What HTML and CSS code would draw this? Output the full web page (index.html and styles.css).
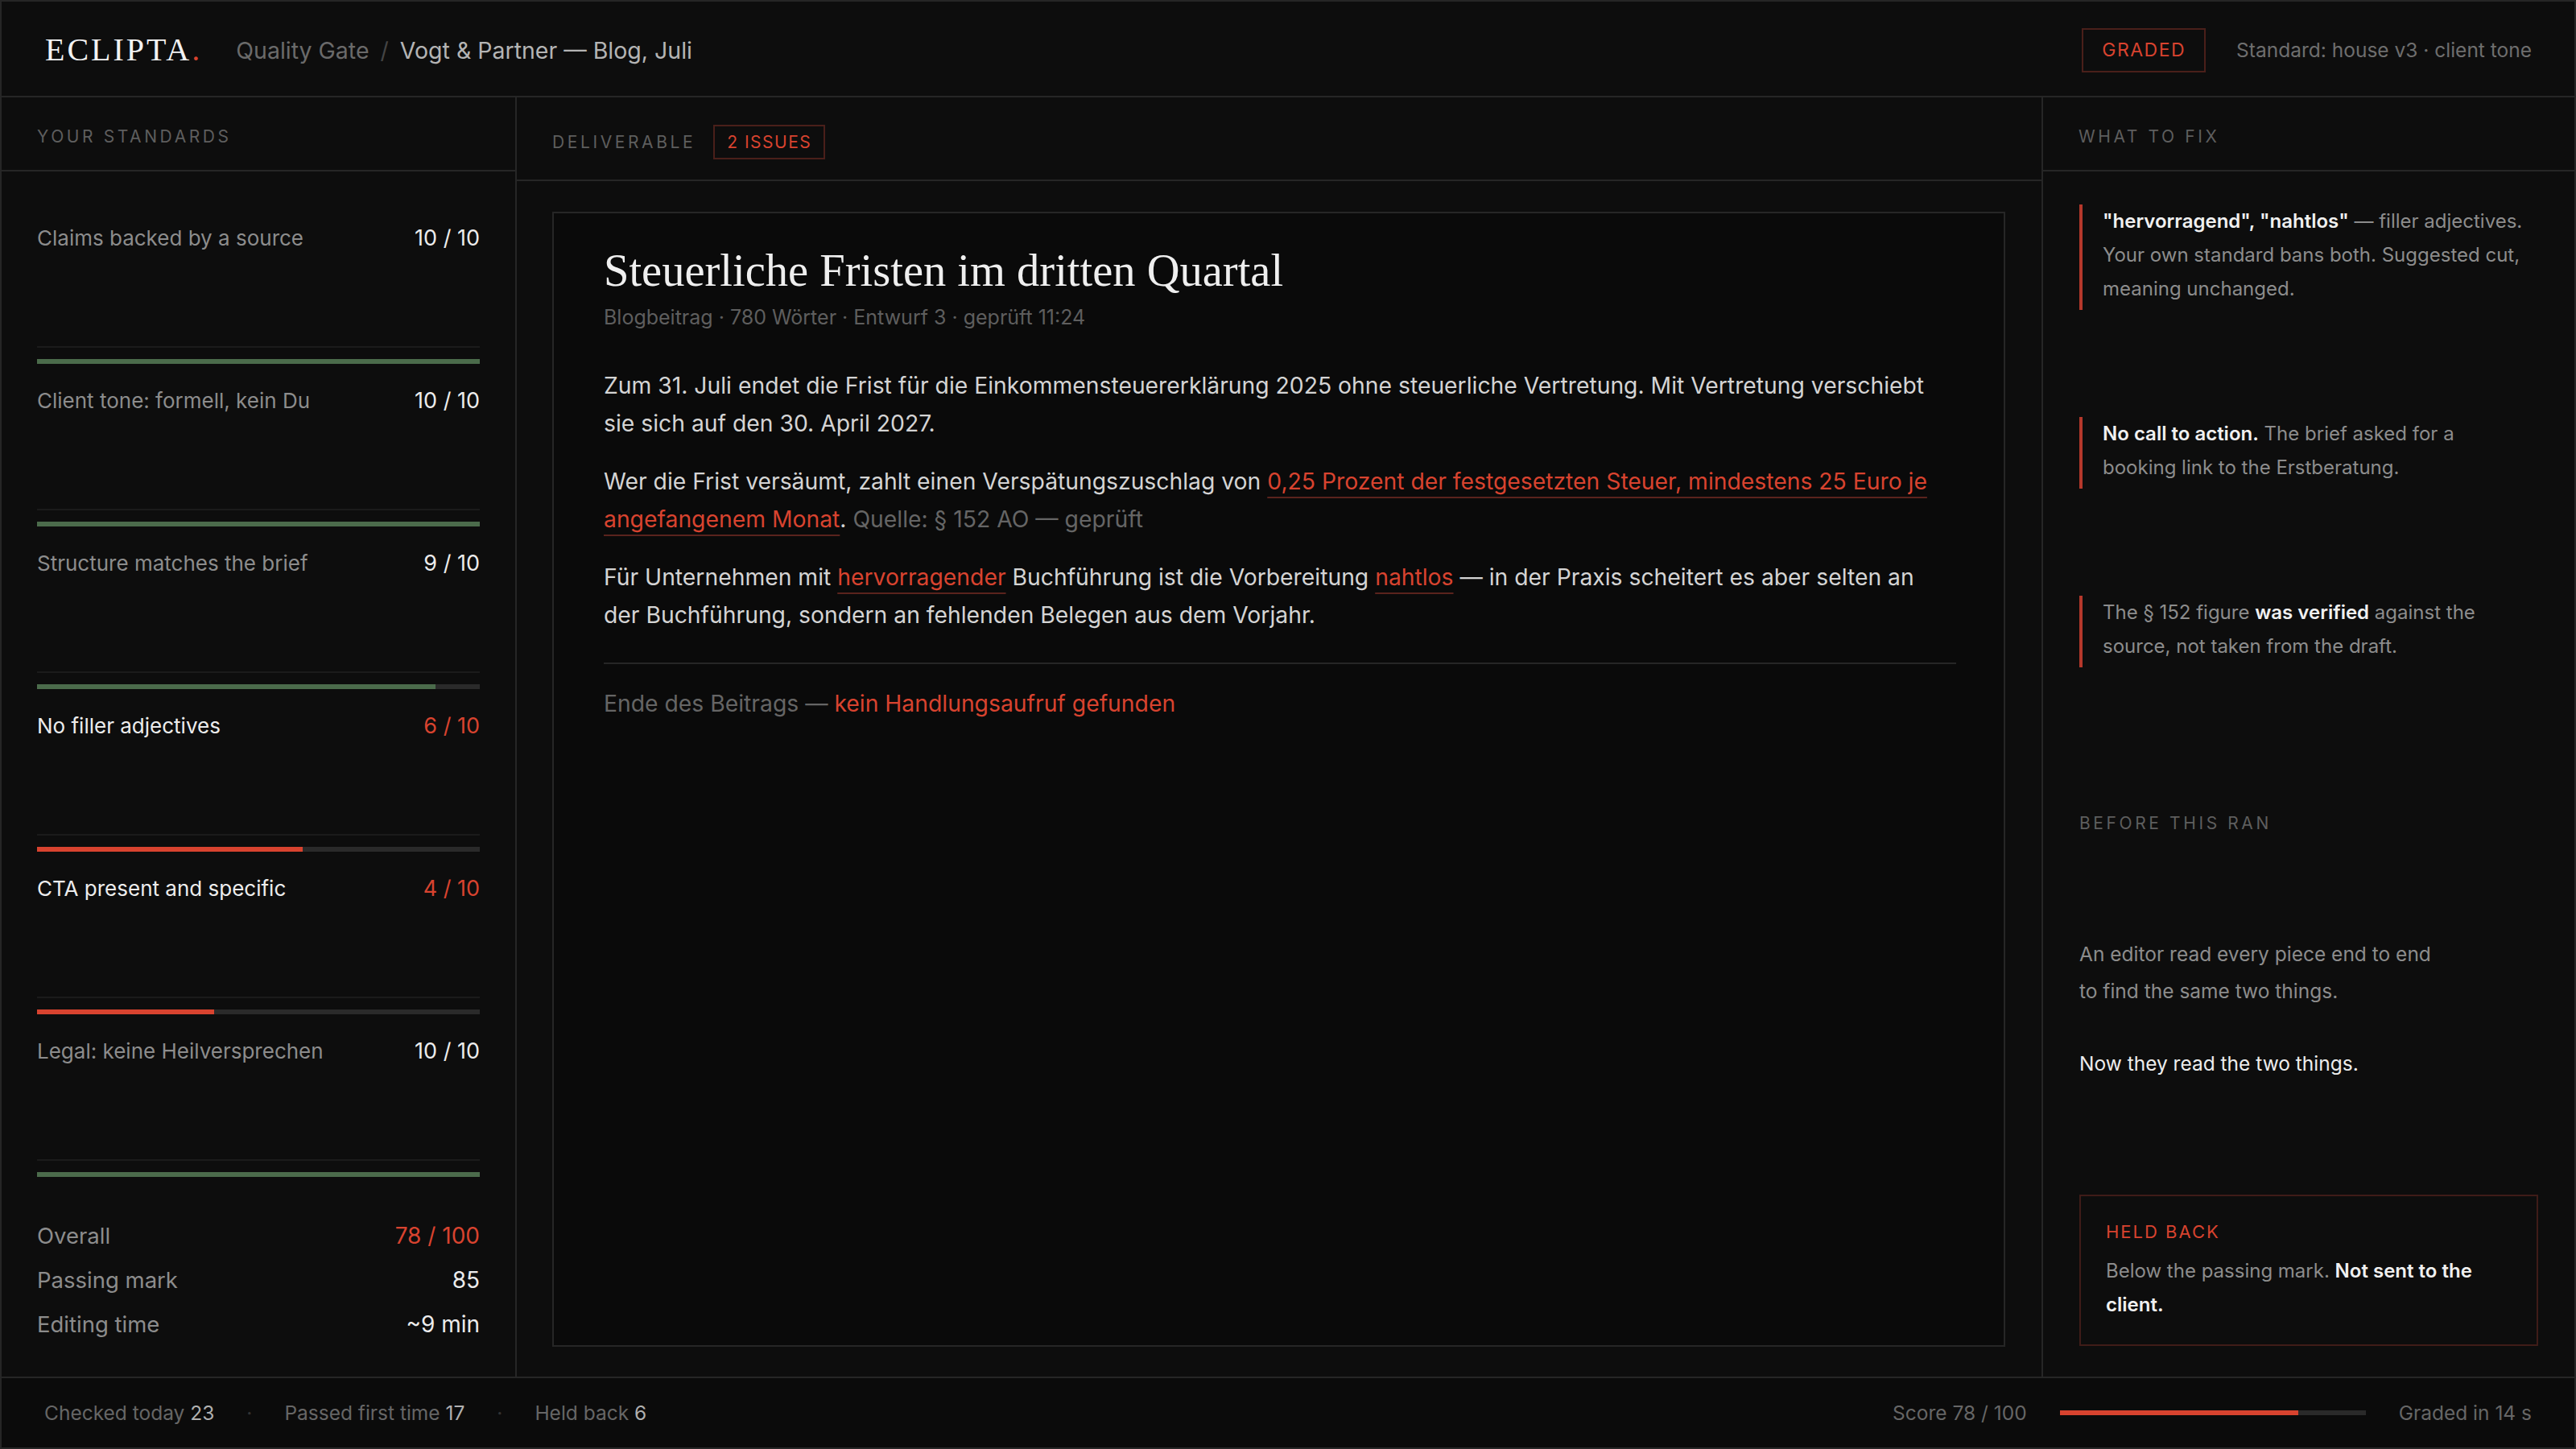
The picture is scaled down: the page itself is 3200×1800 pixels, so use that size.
FILE: index.html
```html
<!DOCTYPE html>
<html lang="de">
<head>
  <meta charset="UTF-8" />
  <meta name="viewport" content="width=device-width, initial-scale=1.0" />
  <title>ECLIPTA — Quality Gate</title>
  <link rel="stylesheet" href="styles.css">
</head>
<body>
  <div class="app">
    <header class="topbar">
      <div class="brand">ECLIPTA<span class="brand-dot">.</span></div>
      <nav class="crumbs">
        <span class="crumb-root">Quality Gate</span>
        <span class="crumb-sep">/</span>
        <span class="crumb-current">Vogt &amp; Partner — Blog, Juli</span>
      </nav>
      <div class="topbar-right">
        <span class="tag tag-lg">GRADED</span>
        <span class="standard">Standard: house v3 · client tone</span>
      </div>
    </header>

    <main class="columns">
      <!-- left: the rubric -->
      <aside class="panel standards">
        <div class="panel-head">Your standards</div>
        <div class="standards-body">
          <div class="std">
            <div class="std-head"><span class="std-name">Claims backed by a source</span><span class="std-score">10 / 10</span></div>
            <div class="std-rule"></div>
            <div class="std-bar"><span class="fill ok" style="width: 100%"></span></div>
          </div>
          <div class="std">
            <div class="std-head"><span class="std-name">Client tone: formell, kein Du</span><span class="std-score">10 / 10</span></div>
            <div class="std-rule"></div>
            <div class="std-bar"><span class="fill ok" style="width: 100%"></span></div>
          </div>
          <div class="std">
            <div class="std-head"><span class="std-name">Structure matches the brief</span><span class="std-score">9 / 10</span></div>
            <div class="std-rule"></div>
            <div class="std-bar"><span class="fill ok" style="width: 90%"></span></div>
          </div>
          <div class="std fail">
            <div class="std-head"><span class="std-name">No filler adjectives</span><span class="std-score">6 / 10</span></div>
            <div class="std-rule"></div>
            <div class="std-bar"><span class="fill bad" style="width: 60%"></span></div>
          </div>
          <div class="std fail">
            <div class="std-head"><span class="std-name">CTA present and specific</span><span class="std-score">4 / 10</span></div>
            <div class="std-rule"></div>
            <div class="std-bar"><span class="fill bad" style="width: 40%"></span></div>
          </div>
          <div class="std">
            <div class="std-head"><span class="std-name">Legal: keine Heilversprechen</span><span class="std-score">10 / 10</span></div>
            <div class="std-rule"></div>
            <div class="std-bar"><span class="fill ok" style="width: 100%"></span></div>
          </div>

          <div class="summary">
            <div class="sum-row"><span>Overall</span><span class="sum-val red">78 / 100</span></div>
            <div class="sum-row"><span>Passing mark</span><span class="sum-val">85</span></div>
            <div class="sum-row"><span>Editing time</span><span class="sum-val">~9 min</span></div>
          </div>
        </div>
      </aside>

      <!-- middle: the draft itself -->
      <section class="deliverable">
        <div class="panel-head mid-head">Deliverable <span class="tag">2 issues</span></div>
        <div class="doc-wrap">
          <article class="doc">
            <h1 class="doc-title">Steuerliche Fristen im dritten Quartal</h1>
            <div class="doc-meta">Blogbeitrag · 780 Wörter · Entwurf 3 · geprüft 11:24</div>
            <p>Zum 31. Juli endet die Frist für die Einkommensteuererklärung 2025 ohne steuerliche Vertretung. Mit Vertretung verschiebt sie sich auf den 30. April 2027.</p>
            <p>Wer die Frist versäumt, zahlt einen Verspätungszuschlag von <span class="flag">0,25 Prozent der festgesetzten Steuer, mindestens 25 Euro je angefangenem Monat</span>. <span class="src">Quelle: § 152 AO — geprüft</span></p>
            <p>Für Unternehmen mit <span class="flag">hervorragender</span> Buchführung ist die Vorbereitung <span class="flag">nahtlos</span> — in der Praxis scheitert es aber selten an der Buchführung, sondern an fehlenden Belegen aus dem Vorjahr.</p>
            <div class="doc-end">Ende des Beitrags — <span class="red">kein Handlungsaufruf gefunden</span></div>
          </article>
        </div>
      </section>

      <!-- right: findings -->
      <aside class="panel fixes">
        <div class="panel-head">What to fix</div>
        <div class="fixes-body">
          <div class="fix"><b>"hervorragend", "nahtlos"</b> — filler adjectives. Your own standard bans both. Suggested cut, meaning unchanged.</div>
          <div class="fix"><b>No call to action.</b> The brief asked for a booking link to the Erstberatung.</div>
          <div class="fix">The § 152 figure <b>was verified</b> against the source, not taken from the draft.</div>

          <div class="sub-head">Before this ran</div>
          <p class="before">An editor read every piece end to end to find the same two things.</p>
          <p class="after">Now they read the two things.</p>

          <div class="held">
            <div class="held-title">HELD BACK</div>
            <div class="held-text">Below the passing mark. <b>Not sent to the client.</b></div>
          </div>
        </div>
      </aside>
    </main>

    <footer class="statusbar">
      <span class="stat">Checked today <em>23</em></span>
      <span class="stat-sep">·</span>
      <span class="stat">Passed first time <em>17</em></span>
      <span class="stat-sep">·</span>
      <span class="stat">Held back <em>6</em></span>
      <div class="status-right">
        <span>Score 78 / 100</span>
        <div class="score-bar"><span class="fill bad" style="width: 78%"></span></div>
        <span>Graded in 14 s</span>
      </div>
    </footer>
  </div>
</body>
</html>
```

FILE: styles.css
```css
* {
  box-sizing: border-box;
}

html, body {
  margin: 0;
  background: #0d0d0d;
}

body {
  font-family: 'Inter', 'Liberation Sans', sans-serif;
  color: #8c8c8c;
}

.app {
  width: 3200px;
  height: 1800px;
  border: 2px solid #262626;
  display: flex;
  flex-direction: column;
  background: #0d0d0d;
}

.red { color: #d8432f; }

/* top bar */
.topbar {
  flex: none;
  height: 119px;
  display: flex;
  align-items: center;
  padding: 3px 53px 0 54px;
  border-bottom: 2px solid #262626;
}

.brand {
  font-family: 'Liberation Serif', serif;
  font-size: 40px;
  letter-spacing: 3px;
  color: #f2f2f2;
  line-height: 1;
}

.brand-dot { color: #d8432f; }

.crumbs {
  margin-left: 42px;
  font-size: 28.5px;
  display: flex;
  align-items: center;
}

.crumb-root { color: #6a6a6a; }
.crumb-sep { color: #444; margin: 0 14px; }
.crumb-current { color: #b4b4b4; }

.topbar-right {
  margin-left: auto;
  display: flex;
  align-items: center;
  gap: 38px;
}

.standard {
  font-size: 24.5px;
  color: #6e6e6e;
}

.tag {
  display: inline-flex;
  align-items: center;
  height: 43px;
  padding: 0 15px;
  border: 2px solid #4a1f1a;
  color: #d8432f;
  font-size: 21px;
  letter-spacing: 1.5px;
  text-transform: uppercase;
}

.tag-lg {
  height: 55px;
  padding: 0 23px;
  font-size: 23px;
}

/* three columns */
.columns {
  flex: 1;
  display: flex;
  min-height: 0;
}

.panel-head {
  flex: none;
  height: 92px;
  padding: 8px 44px 0;
  display: flex;
  align-items: center;
  border-bottom: 2px solid #262626;
  font-size: 21px;
  line-height: 32px;
  letter-spacing: 3.6px;
  text-transform: uppercase;
  color: #5e5e5e;
}

.standards {
  width: 640px;
  flex: none;
  border-right: 2px solid #262626;
}

.standards-body {
  padding: 63px 44px 0;
}

.std {
  height: 202px;
}

.std-head {
  display: flex;
  justify-content: space-between;
  font-size: 26px;
  line-height: 40px;
}

.std-score { color: #ececec; font-size: 27px; }
.std.fail .std-name { color: #ececec; }
.std.fail .std-score { color: #d8432f; }

.std-rule {
  margin-top: 114px;
  height: 2px;
  background: #1b1b1b;
}

.std-bar, .score-bar {
  height: 6px;
  background: #2a2a2a;
}

.std-bar { margin-top: 14px; }

.fill {
  display: block;
  height: 100%;
}

.fill.ok { background: #4b6b4b; }
.fill.bad { background: #d8432f; }

.summary {
  margin-top: 20px;
}

.sum-row {
  display: flex;
  justify-content: space-between;
  font-size: 27.5px;
  line-height: 55px;
}

.sum-val { color: #ececec; font-size: 28px; }
.sum-val.red { color: #d8432f; }

/* middle */
.deliverable {
  flex: 1;
  display: flex;
  flex-direction: column;
  border-right: 2px solid #262626;
}

.mid-head {
  height: 104px;
  padding-top: 9px;
  gap: 22px;
}

.mid-head .tag {
  letter-spacing: 1.5px;
}

.doc-wrap {
  flex: 1;
  display: flex;
  padding: 38px 45px 37px 44px;
}

.doc {
  flex: 1;
  background: #0a0a0a;
  border: 2px solid #262626;
  padding: 39px 59px 0 62px;
}

.doc-title {
  margin: 0;
  font-family: 'Liberation Serif', serif;
  font-weight: normal;
  font-size: 56.5px;
  line-height: 64px;
  color: #efefef;
}

.doc-meta {
  margin: 8px 0 44px;
  font-size: 25px;
  line-height: 36px;
  color: #5e5e5e;
}

.doc p {
  margin: 0 0 25px;
  font-size: 28.3px;
  line-height: 47px;
  color: #d4d4d4;
}

.flag {
  color: #d8432f;
  text-decoration: underline;
  text-decoration-color: #5a231d;
  text-decoration-thickness: 2px;
  text-underline-offset: 9px;
}

.src { color: #656565; }

.doc-end {
  margin-top: 35px;
  padding-top: 26px;
  border-top: 2px solid #262626;
  font-size: 28.3px;
  line-height: 47px;
  color: #656565;
}

/* right */
.fixes {
  width: 660px;
  flex: none;
}

.fixes-body {
  padding: 41px 45px 0;
}

.fix {
  border-left: 4px solid #b5382b;
  padding: 0 15px 5px 25px;
  margin-bottom: 133px;
  font-size: 24px;
  line-height: 42px;
}

.fix:nth-child(3) { margin-bottom: 0; }

.fix b, .held-text b {
  color: #f0f0f0;
  font-weight: 600;
}

.sub-head {
  margin-top: 178px;
  font-size: 21px;
  line-height: 32px;
  letter-spacing: 3.6px;
  text-transform: uppercase;
  color: #5e5e5e;
}

.before, .after {
  margin: 123px 0 0;
  max-width: 445px;
  font-size: 24.5px;
  line-height: 46px;
}

.after {
  margin-top: 44px;
  color: #ececec;
}

.held {
  margin-top: 140px;
  border: 2px solid #3f1c18;
  padding: 28px 31px;
}

.held-title {
  font-size: 22px;
  line-height: 32px;
  letter-spacing: 2px;
  color: #d8432f;
}

.held-text {
  margin-top: 12px;
  font-size: 24px;
  line-height: 42px;
}

/* status bar */
.statusbar {
  flex: none;
  height: 88px;
  display: flex;
  align-items: center;
  padding: 0 53px;
  border-top: 2px solid #262626;
  background: #0b0b0b;
  font-size: 24.5px;
  color: #666;
}

.stat em {
  font-style: normal;
  color: #b0b0b0;
}

.stat-sep {
  margin: 0 40px;
  color: #333;
}

.status-right {
  margin-left: auto;
  display: flex;
  align-items: center;
}

.score-bar {
  width: 380px;
  margin: 0 41px;
}
```
